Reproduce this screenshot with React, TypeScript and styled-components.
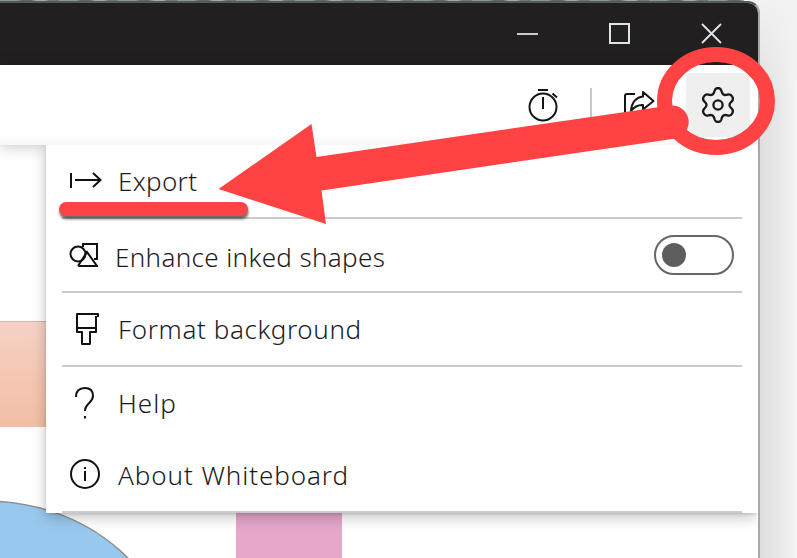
import React from "react";
import styled, { createGlobalStyle } from "styled-components";

const Global = createGlobalStyle`
  *{box-sizing:border-box}
  body{margin:0;background:#f2f2f2;overflow:hidden;font-family:"Noto Sans","Open Sans",sans-serif}
`;

const Desktop = styled.div`
  position: relative;
  width: 797px;
  height: 558px;
  overflow: hidden;
  padding-top: 1px;
  background: linear-gradient(90deg, #eeeeee 0 759px, #dedede 760px, #ececec 785px, #f4f4f4 797px);
`;
const Wallpaper = styled.div`
  position: absolute;
  inset: 0 0 auto 0;
  width: 744px;
  height: 1px;
  background: repeating-linear-gradient(90deg, #8d9494 0 17px, #626767 22px 31px, #a3aaa9 36px 45px, #707575 49px 59px);
`;
const Corner = styled.div`
  position: absolute;
  top: 0;
  right: 0;
  width: 60px;
  height: 100px;
  background: linear-gradient(180deg, #f2f2f2, transparent);
`;
const Window = styled.main`
  position: relative;
  width: 760px;
  height: 557px;
  display: flex;
  flex-direction: column;
  background: #fff;
  border-top: 2px solid #555a5a;
  border-right: 2px solid #a6a8a9;
  border-top-right-radius: 12px;
  overflow: hidden;
`;
const TitleBar = styled.header`
  flex: none;
  height: 62px;
  display: flex;
  justify-content: flex-end;
  align-items: center;
  gap: 71px;
  padding: 0 36px 2px 0;
  background: #221f20;
`;
const Toolbar = styled.nav`
  position: relative;
  z-index: 1;
  flex: none;
  height: 80px;
  display: flex;
  justify-content: flex-end;
  align-items: center;
  padding-right: 8px;
  background: linear-gradient(#fff 88%, #f7f7f7);
  box-shadow: 0 2px 14px rgba(0, 0, 0, 0.22);
`;
const Separator = styled.span`
  width: 2px;
  height: 34px;
  margin: 0 31.5px 0 31px;
  background: #c8c8c8;
`;
const SettingsButton = styled.button`
  display: grid;
  place-items: center;
  width: 64px;
  height: 64px;
  margin-left: 31px;
  padding: 0;
  border: 0;
  border-radius: 3px;
  background: #efefef;
`;
const Canvas = styled.section`
  position: relative;
  flex: 1;
  display: flex;
`;
const Drawing = styled.svg`
  position: absolute;
  left: 0;
  top: 0;
`;
const Menu = styled.div`
  position: relative;
  z-index: 2;
  width: 711px;
  height: 368px;
  margin-left: 46px;
  padding: 0 15px 0 16px;
  background: #fff;
  box-shadow: 0 4px 14px rgba(0, 0, 0, 0.24), 0 1px 3px rgba(0, 0, 0, 0.14);
  clip-path: inset(0 0 -30px -30px);
`;
const Item = styled.div<{ $h: number; $rule?: boolean; $gap?: number }>`
  display: flex;
  align-items: center;
  height: ${(p) => p.$h}px;
  gap: ${(p) => p.$gap ?? 10}px;
  padding-right: 8px;
  border-bottom: ${(p) => (p.$rule ? "2px solid #cbcbcb" : "0")};
`;
const Glyph = styled.svg`
  flex: none;
  width: 46px;
  height: 46px;
  fill: none;
  stroke: #111;
  stroke-width: 2;
`;
const Label = styled.span<{ $track: number; $drop?: number }>`
  flex: 1;
  padding-top: ${(p) => p.$drop ?? 0}px;
  white-space: nowrap;
  font-size: 26px;
  font-weight: 350;
  line-height: 36px;
  letter-spacing: ${(p) => p.$track}px;
  color: #1c1c1c;
`;
const Toggle = styled.span`
  display: flex;
  align-items: center;
  width: 80px;
  height: 40px;
  padding-left: 6px;
  border: 2px solid #666;
  border-radius: 20px;
`;
const Knob = styled.span`
  width: 24px;
  height: 24px;
  border-radius: 50%;
  background: #5e5e5e;
`;
const Annotation = styled.svg`
  position: absolute;
  inset: 0;
  z-index: 5;
  pointer-events: none;
`;
const Underline = styled.div`
  position: absolute;
  z-index: 5;
  left: 59px;
  top: 202px;
  width: 189px;
  height: 13.5px;
  border-radius: 7px;
  background: #ff4343;
  box-shadow: 0.5px 3px 3px rgba(0, 0, 0, 0.6);
`;

const gearPath =
  "M18 1Q20.600 1 21.300 3.500C22.200 7.500 24 8.700 27.500 7.600C30 6.800 31 7.300 32.200 9.500C33.500 11.800 33.400 13 31.500 14.600C28.800 17 28.800 19 31.500 21.400C33.400 23 33.500 24.200 32.200 26.500C31 28.700 30 29.200 27.500 28.400C24 27.300 22.200 28.500 21.300 32.500Q20.600 35 18 35Q15.400 35 14.700 32.500C13.800 28.500 12 27.300 8.500 28.400C6 29.200 5 28.700 3.800 26.500C2.500 24.200 2.600 23 4.500 21.400C7.200 19 7.200 17 4.500 14.600C2.600 13 2.500 11.800 3.800 9.500C5 7.300 6 6.800 8.500 7.600C12 8.700 13.800 7.500 14.700 3.500Q15.400 1 18 1Z";

export default function App() {
  return (
    <Desktop>
      <Global />
      <Corner />
      <Wallpaper />
      <Window>
        <TitleBar>
          <svg width="22" height="22"><path d="M1 12H22" stroke="#c9cccb" strokeWidth="2" /></svg>
          <svg width="21" height="22" fill="none"><rect x="1" y="2" width="19" height="19" stroke="#dfe3e2" strokeWidth="2" /></svg>
          <svg width="21" height="22"><path d="M1 2L20 21M20 2L1 21" stroke="#e3e6e5" strokeWidth="1.8" /></svg>
        </TitleBar>
        <Toolbar>
          <svg width="32" height="34" fill="none" stroke="#151515" strokeWidth="2">
            <circle cx="16" cy="19" r="13.5" />
            <path d="M11 2H21M16 9V21M25.500 5.500L30 9.500" />
          </svg>
          <Separator />
          <svg width="32" height="34" fill="none" stroke="#151515" strokeWidth="2" strokeLinejoin="round">
            <path d="M12 6H4Q2 6 2 8V28Q2 30 4 30H24Q26 30 26 28V22" />
            <path d="M20 4L30.500 13L20 21.500V17Q13 16.500 8 23Q9 10 20 8.500Z" />
          </svg>
          <SettingsButton>
            <svg width="36" height="36" fill="none" stroke="#1a1a1a" strokeWidth="2.300" strokeLinejoin="round">
              <path d={gearPath} />
              <circle cx="18" cy="18" r="4.600" />
            </svg>
          </SettingsButton>
        </Toolbar>
        <Canvas>
          <Drawing width="758" height="413">
            <defs>
              <linearGradient id="peach" x2="0" y2="1"><stop stopColor="#f6d2c4" /><stop offset="1" stopColor="#f3bea5" /></linearGradient>
            </defs>
            <path d="M0 176.500H60V282H0Z" fill="url(#peach)" />
            <path d="M0 176.500H60" stroke="#d6b5aa" />
            <ellipse cx="-14" cy="522" rx="188" ry="166" fill="#99c8ee" stroke="#8d8f91" strokeWidth="1.500" />
            <path d="M236 350H342V420H236Z" fill="#e6a7cb" />
          </Drawing>
          <Menu>
            <Item $h={74} $rule>
              <Glyph><path d="M9 15V30M13 22H39M31 15L38.500 22L31 29" /></Glyph>
              <Label $track={0.3}>Export</Label>
            </Item>
            <Item $h={74} $rule $gap={7}>
              <Glyph><circle cx="16" cy="22" r="7.500" /><path d="M21 15V12H35V27H32M16 34H36M16 34L25 20L35 34" /></Glyph>
              <Label $track={0.36} $drop={4}>Enhance inked shapes</Label>
              <Toggle><Knob /></Toggle>
            </Item>
            <Item $h={74} $rule>
              <Glyph><path d="M36 11V8H15V26H20V38H28V26H34V10M15 22H34" strokeLinejoin="round" /></Glyph>
              <Label $track={0.6}>Format background</Label>
            </Item>
            <Item $h={72}>
              <Glyph><path d="M14 17Q14 8 23 8Q31 8 31 16C31 23 23 23 23 31M23 36V38.500" /></Glyph>
              <Label $track={1}>Help</Label>
            </Item>
            <Item $h={74} $rule>
              <Glyph><circle cx="23" cy="22" r="14" /><path d="M23 19V29M23 15V17" /></Glyph>
              <Label $track={0.93}>About Whiteboard</Label>
            </Item>
          </Menu>
        </Canvas>
      </Window>
      <Underline />
      <Annotation width="797" height="558">
        <ellipse cx="716" cy="101" rx="51.500" ry="46.500" fill="none" stroke="#ff4343" strokeWidth="15" />
        <path d="M218.500 189L311.500 124L316.500 157L670 105.500A16.500 16.500 0 0 1 674 138.700L321.500 190.500L326 224Z" fill="#ff4343" />
      </Annotation>
    </Desktop>
  );
}
